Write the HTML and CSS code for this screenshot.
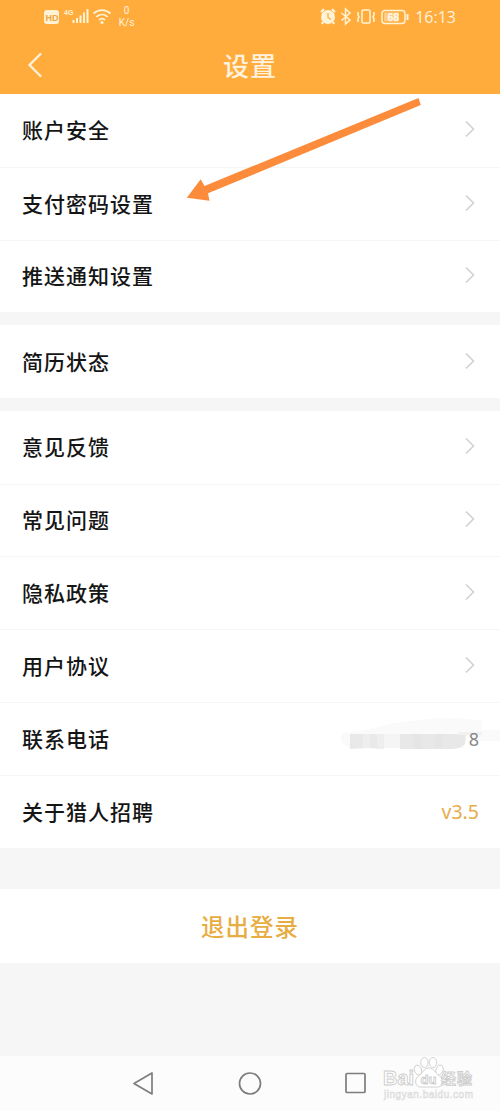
FILE: index.html
```html
<!DOCTYPE html>
<html lang="zh-CN">
<head>
<meta charset="utf-8">
<title>设置</title>
<link rel="stylesheet" href="styles.css">
</head>
<body>
<svg class="defs" width="0" height="0"><symbol id="chev" viewBox="0 0 10 18"><path d="M1 1.500 8.500 9 1 16.500" fill="none" stroke="#d2d2d2" stroke-width="1.600"/></symbol></svg>
<main class="screen">
  <header class="header">
    <div class="status">
      <svg class="status-left" width="72" height="28" viewBox="0 0 72 28" fill="none" stroke="#fff3d5">
        <rect x="0" y="3" width="15" height="14" rx="3" fill="#fff3d5" stroke="none"/>
        <text x="1.500" y="13.500" class="hd">HD</text>
        <text x="20" y="8" class="g4">4G</text>
        <path d="M29.500 16v-3M33 16v-5M36.500 16V8.500M40 16V5.500M43.500 16V2" stroke-width="2"/>
        <path d="M49.500 6.500c5-4.500 12-4.500 17 0M52.300 9.800c3.500-3 8-3 11.400 0M55 13c2-1.700 4-1.700 6 0" stroke-width="1.700"/>
        <circle cx="58" cy="15.500" r="1.600" fill="#fff3d5" stroke="none"/>
      </svg>
      <div class="speed"><span>0</span><span>K/s</span></div>
      <svg class="status-right" width="92" height="20" viewBox="0 0 92 20" fill="none" stroke="#fff3d5">
        <circle cx="10" cy="10" r="7" fill="#fff3d5" stroke="none"/>
        <path d="M3 5l3-3M14 2l3 3M5 15l-1 2M15 15l1 2" stroke-width="2.200"/>
        <path d="M10 6v4.500l3 2" stroke="#ffac3d" stroke-width="1.300"/>
        <path d="M23.500 6 32 13l-4.500 4V2L32 6l-8.500 7.500" stroke-width="1.500"/>
        <rect x="44" y="3" width="8" height="13" rx="1" stroke-width="1.500"/>
        <path d="M40 5v3l1 2-1 2v3M56 5v3l-1 2 1 2v3" stroke-width="1.600"/>
        <rect x="64" y="3.500" width="23" height="13" rx="3" stroke-width="1.500"/>
        <rect x="66" y="5.500" width="15" height="9" rx="1" fill="#fff3d5" fill-opacity=".45" stroke="none"/>
        <path d="M89.500 7v6" stroke-width="2"/>
        <text x="69.500" y="14" class="battery">68</text>
      </svg>
      <span class="time">16:13</span>
    </div>
    <div class="titlebar">
      <svg class="back" width="16" height="26" viewBox="0 0 16 26"><path d="M13.500 2 2.500 13l11 11" fill="none" stroke="#fff3df" stroke-width="2.200" stroke-linecap="round"/></svg>
      <h1 class="title">设置</h1>
    </div>
  </header>
  <section class="group">
    <div class="row"><span>账户安全</span><svg class="chevron"><use href="#chev"/></svg></div>
    <div class="row"><span>支付密码设置</span><svg class="chevron"><use href="#chev"/></svg></div>
    <div class="row"><span>推送通知设置</span><svg class="chevron"><use href="#chev"/></svg></div>
  </section>
  <section class="group">
    <div class="row"><span>简历状态</span><svg class="chevron"><use href="#chev"/></svg></div>
  </section>
  <section class="group">
    <div class="row"><span>意见反馈</span><svg class="chevron"><use href="#chev"/></svg></div>
    <div class="row"><span>常见问题</span><svg class="chevron"><use href="#chev"/></svg></div>
    <div class="row"><span>隐私政策</span><svg class="chevron"><use href="#chev"/></svg></div>
    <div class="row"><span>用户协议</span><svg class="chevron"><use href="#chev"/></svg></div>
    <div class="row"><span>联系电话</span>
      <span class="phone">
        <svg class="mask" width="160" height="36" viewBox="0 0 160 36">
          <path d="M3 15Q20 14 40 8Q80 0 110 0l32 2v10l18-1v12h-28L124 16v14H10Q-4 23 3 15Z" fill="#fafafa"/>
          <path d="M10 16h34v15l-14-1-20 1Z" fill="#e9e9e9"/>
          <path d="M23 16h7v14h-7ZM37 16h7v15h-7Z" fill="#eee"/>
          <path d="M44 16h16v14H44Z" fill="#f5f5f5"/>
          <path d="M60 16h66l-1 10q-4 5-14 5H60Z" fill="#e8e8e8"/>
          <path d="M74 16h8v15h-8ZM94 16h8v14h-8Z" fill="#e5e5e5"/>
          <path d="M118 14h24v3h-24Z" fill="#f1f1f1"/>
        </svg>
        <span class="digit">8</span>
      </span>
    </div>
    <div class="row"><span>关于猎人招聘</span><span class="version">v3.5</span></div>
  </section>
  <button class="logout">退出登录</button>
  <nav class="nav">
    <svg width="300" height="55" viewBox="0 0 300 55" fill="none" stroke="#7d7d7d" stroke-width="1.700" stroke-linejoin="round">
      <path d="M52 17v21L34 27.500Z"/><circle cx="150" cy="27.500" r="10.500"/><rect x="246" y="17.500" width="19" height="19" rx="1"/>
    </svg>
  </nav>
  <svg class="arrow" width="236" height="106" viewBox="0 0 236 106"><path d="M232.500 1 234.800 8 22 96.300 23.500 103.800.8 100.800 14.700 82.300 18.500 89Z" fill="#fc8c3b"/></svg>
  <svg class="watermark" width="104" height="50" viewBox="0 0 104 50">
    <g fill="#fff" stroke="#cdcdcd" stroke-width=".9">
      <ellipse cx="36" cy="14" rx="3.500" ry="5" transform="rotate(-20 36 14)"/>
      <ellipse cx="42.500" cy="6.500" rx="3.700" ry="5"/>
      <ellipse cx="51" cy="6.500" rx="3.700" ry="5"/>
      <ellipse cx="57.500" cy="14" rx="3.500" ry="5" transform="rotate(20 57.500 14)"/>
      <path d="M46.500 12c-5 0-6 6-10 8-5 4-3 11 2 11h17c6 0 7-7 2-11-4-3-6-8-11-8Z"/>
      <text x="1" y="29" class="bai" textLength="31">Bai</text>
      <text x="38.500" y="28" class="du" textLength="16">du</text>
      <text x="59" y="28" class="jing" textLength="31">经验</text>
    </g>
    <text x="2" y="42" class="url" textLength="89">jingyan.baidu.com</text>
  </svg>
</main>
</body>
</html>
```
FILE: styles.css
```css
* { box-sizing: border-box; }
body { margin: 0; background: #f6f6f6; font-family: "Noto Sans CJK SC", sans-serif; }
.defs { position: absolute; }
.screen { position: relative; width: 500px; height: 1111px; display: flex; flex-direction: column; overflow: hidden; background: #f6f6f6; }
.header { height: 94px; flex: none; background: #ffac3d; color: #fff3df; }
.status { height: 36px; display: flex; align-items: flex-start; padding: 0 44px 0 44px; }
.status-left { margin-top: 7px; flex: none; }
.hd { font: bold 9px "Liberation Sans", sans-serif; fill: #f0a43c; stroke: none; }
.g4 { font: bold 7px "Liberation Sans", sans-serif; fill: #fff3d5; stroke: none; }
.speed { width: 22px; padding-top: 5px; display: flex; flex-direction: column; align-items: center; font: 10px/12px Roboto, sans-serif; }
.status-right { margin: 7px 0 0 181px; flex: none; }
.battery { font: bold 10.5px "Liberation Sans", sans-serif; fill: #fffaf0; stroke: none; }
.time { margin: 7px 0 0 5px; font: 16px/21px "Open Sans", sans-serif; }
.titlebar { height: 58px; display: grid; grid-template-columns: 50px 1fr 50px; align-items: center; }
.back { margin-left: 27px; }
.title { margin: 0; text-align: center; font-size: 26px; line-height: 40px; font-weight: 500; letter-spacing: 1px; }
.group { background: #fff; margin-bottom: 12.8px; flex: none; }
.row { height: 72.8px; padding: 0 21px 2px 22px; display: flex; align-items: center; justify-content: space-between; font-size: 21px; font-weight: 500; letter-spacing: 1px; color: #151515; }
.row + .row { border-top: 1px solid #f5f5f5; }
.chevron { width: 10px; height: 18px; margin-right: 4px; }
.phone { position: relative; font: 18px/24px "Noto Sans", sans-serif; color: #888; letter-spacing: 0; padding-top: 2px; }
.mask { position: absolute; right: -21px; top: -7px; }
.digit { position: relative; }
.version { font: 19.5px/24px "Noto Sans", sans-serif; letter-spacing: 0; color: #e6ac4c; padding-top: 2px; }
.logout { height: 74px; flex: none; margin: 29px 0 0; border: 0; padding: 0; background: #fff; color: #e8ad42; font: 500 23.5px "Noto Sans CJK SC", sans-serif; letter-spacing: 1px; }
.nav { height: 55px; flex: none; margin-top: auto; display: flex; justify-content: center; background: #fcfcfc; }
.arrow { position: absolute; left: 186px; top: 97px; }
.watermark { position: absolute; left: 382px; top: 1056px; }
.bai { font: bold 20px "Liberation Sans", sans-serif; }
.du { font: bold 13px "Liberation Sans", sans-serif; }
.jing { font: bold 15px "Noto Sans CJK SC", sans-serif; }
.url { font: 10px "Liberation Sans", sans-serif; fill: #fff; stroke: #dadada; stroke-width: .6px; }
```
